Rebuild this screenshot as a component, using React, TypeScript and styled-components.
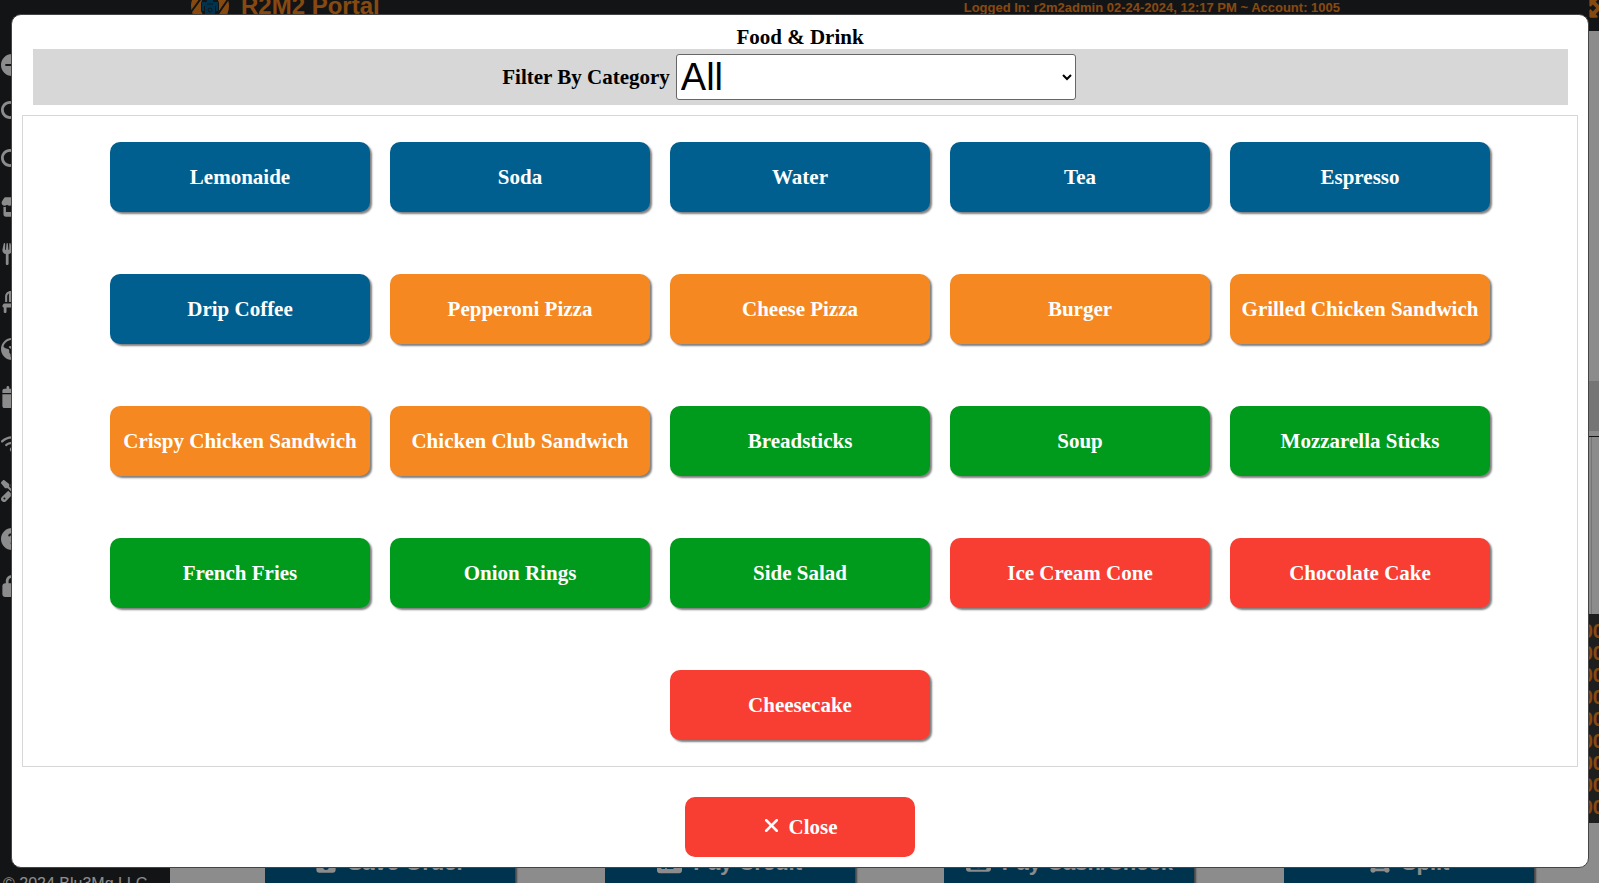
import React, { useState } from "react";
import styled, { createGlobalStyle } from "styled-components";
import {
  FaCalendar,
  FaChair,
  FaCircleArrowRight,
  FaCircleQuestion,
  FaCreditCard,
  FaDrawPolygon,
  FaEarthAmericas,
  FaFloppyDisk,
  FaLock,
  FaMagnifyingGlass,
  FaMaximize,
  FaRegMoneyBill1,
  FaScrewdriverWrench,
  FaStore,
  FaUtensils,
  FaWifi,
  FaXmark,
} from "react-icons/fa6";

const color = {
  blue: "#005f8f",
  orange: "#f58820",
  green: "#009a1c",
  red: "#f83d32",
  shell: "#242628",
};

const GlobalStyle = createGlobalStyle`
  *, *::before, *::after { box-sizing: border-box; }
  body { margin: 0; background: #fff; font-family: "Liberation Sans", Arial, sans-serif; }
  button, select { font: inherit; }
`;

const Page = styled.div`
  height: 100vh;
  display: flex;
  flex-direction: column;
  overflow: hidden;
`;

const Header = styled.header`
  flex: none;
  display: flex;
  align-items: center;
  height: 50px;
  margin-top: -19px;
  padding-left: 190px;
  background: ${color.shell};
  color: ${color.orange};
  font-weight: bold;
`;

const Brand = styled.div`
  flex: 1;
  display: flex;
  align-items: center;
  gap: 11px;
  font-size: 24px;
  line-height: 28px;
`;

const Session = styled.div`
  padding-top: 3px;
  margin-right: 248px;
  font-size: 13px;
`;

const IconButton = styled.button`
  display: flex;
  margin: 4px -11px 0 0;
  padding: 0;
  border: 0;
  background: none;
  color: inherit;
  font-size: 22px;
`;

const Body = styled.div`
  flex: 1;
  min-height: 0;
  display: flex;
`;

const Sidebar = styled.aside`
  width: 170px;
  display: flex;
  flex-direction: column;
  justify-content: space-between;
  background: ${color.shell};
  color: #fff;
`;

const Nav = styled.nav`
  display: flex;
  flex-direction: column;
  justify-content: space-between;
  height: 566px;
  padding: 23px 0 0 1px;

  a {
    display: flex;
    color: inherit;
    font-size: 22px;
  }
`;

const Copyright = styled.small`
  margin: 0 0 -10px 3px;
  font-size: 16px;
  line-height: 18px;
`;

const Main = styled.main`
  flex: 1;
  display: flex;
  flex-direction: column;
`;

const Ticket = styled.section`
  flex: 1;
  display: flex;
  flex-direction: column;
  justify-content: flex-end;
`;

const TicketHead = styled.div`
  height: 50px;
  margin-bottom: 5px;
  background: #d6d6d6;
`;

const TicketFrame = styled.div`
  border-top: 1px solid #222;
`;

const TicketLines = styled.div`
  height: 177px;
  margin-right: 7px;
  border-right: 1px solid #d6d6d6;
`;

const Totals = styled.ul`
  margin: 0 -5px 0 0;
  padding: 6px 0 5px;
  list-style: none;
  background: #383838;
  color: ${color.orange};
  font-size: 20px;
  font-weight: bold;
  line-height: 22px;
  text-align: right;
`;

const Actions = styled.div`
  flex: none;
  display: grid;
  grid-template-columns: repeat(4, 1fr);
  justify-items: center;
  margin: 10px 0 -10px;
  padding: 0 20px 0 50px;
`;

const ActionButton = styled.button<{ $wideIcon?: boolean }>`
  display: flex;
  align-items: center;
  justify-content: center;
  gap: 11px;
  width: 250px;
  height: 60px;
  border: 0;
  border-radius: 10px;
  background: ${color.blue};
  box-shadow: 2px 2px 2px gray;
  color: #fff;
  font-size: 22px;
  font-weight: bold;

  svg {
    font-size: ${(p) => (p.$wideIcon ? 25 : 22)}px;
  }
`;

const Backdrop = styled.div`
  position: fixed;
  inset: 0;
  padding: 14px 10px 15px 11px;
  background: rgba(0, 0, 0, 0.45);
`;

const Dialog = styled.div`
  display: flex;
  flex-direction: column;
  padding: 10px;
  border: 1px solid #444;
  border-radius: 10px;
  background: #fff;
  color: #000;
  font-family: "Liberation Serif", "Times New Roman", serif;
  font-size: 21px;
  font-weight: bold;
`;

const Title = styled.h1`
  margin: 0;
  font-size: 21px;
  line-height: 24px;
  text-align: center;
`;

const FilterBar = styled.div`
  display: flex;
  align-items: center;
  justify-content: center;
  gap: 6px;
  margin: 0 10px 0 11px;
  padding: 5px 28px 5px 5px;
  background: #d7d7d7;
`;

const CategorySelect = styled.select`
  width: 400px;
  height: 46px;
  border: 1px solid #666;
  border-radius: 3px;
  background-color: #fff;
  color: #000;
  font-family: "Liberation Sans", Arial, sans-serif;
  font-size: 38px;
  font-weight: normal;
`;

const ItemPanel = styled.div`
  display: flex;
  flex-wrap: wrap;
  justify-content: center;
  gap: 62px 20px;
  margin-top: 10px;
  padding: 26px 80px;
  border: 1px solid #d7d7d7;
`;

const ItemButton = styled.button<{ $tone: string }>`
  width: 260px;
  height: 70px;
  padding: 0;
  border: 0;
  border-radius: 10px;
  background: ${(p) => p.$tone};
  box-shadow: 2px 2px 2px gray;
  color: #fff;
`;

const CloseButton = styled.button`
  display: flex;
  align-items: center;
  align-self: center;
  justify-content: center;
  gap: 7px;
  width: 230px;
  height: 60px;
  margin-top: 30px;
  padding: 0 2px 0 0;
  border: 0;
  border-radius: 10px;
  background: ${color.red};
  color: #fff;

  svg {
    margin-bottom: 3px;
  }
`;

const categories = [
  { name: "Drinks", tone: color.blue, items: ["Lemonaide", "Soda", "Water", "Tea", "Espresso", "Drip Coffee"] },
  {
    name: "Entrees",
    tone: color.orange,
    items: ["Pepperoni Pizza", "Cheese Pizza", "Burger", "Grilled Chicken Sandwich", "Crispy Chicken Sandwich", "Chicken Club Sandwich"],
  },
  {
    name: "Sides",
    tone: color.green,
    items: ["Breadsticks", "Soup", "Mozzarella Sticks", "French Fries", "Onion Rings", "Side Salad"],
  },
  { name: "Desserts", tone: color.red, items: ["Ice Cream Cone", "Chocolate Cake", "Cheesecake"] },
];

const navItems = [
  { label: "Sign in", Icon: FaCircleArrowRight },
  { label: "Search orders", Icon: FaMagnifyingGlass },
  { label: "Search customers", Icon: FaMagnifyingGlass },
  { label: "Store", Icon: FaStore },
  { label: "Menu", Icon: FaUtensils },
  { label: "Tables", Icon: FaChair },
  { label: "Online", Icon: FaEarthAmericas },
  { label: "Calendar", Icon: FaCalendar },
  { label: "Network", Icon: FaWifi },
  { label: "Tools", Icon: FaScrewdriverWrench },
  { label: "Help", Icon: FaCircleQuestion },
  { label: "Lock", Icon: FaLock },
];

const actions = [
  { label: "Save Order", Icon: FaFloppyDisk, wide: false },
  { label: "Pay Credit", Icon: FaCreditCard, wide: true },
  { label: "Pay Cash/Check", Icon: FaRegMoneyBill1, wide: true },
  { label: "Split", Icon: FaDrawPolygon, wide: false },
];

function Logo() {
  return (
    <svg width="40" height="40" viewBox="0 0 40 40" aria-hidden="true">
      <circle cx="20" cy="20" r="19" fill={color.orange} />
      <path d="M14 8h12l3 9v8l-4 8H15l-4-8v-8z" fill={color.shell} />
      <path d="M1 26L12 11M28 28L39 12" stroke={color.shell} strokeWidth="2" />
      <path d="M17 10h6v6h5v9h-2v-5h-1v10h-3v5h-4v-5h-3V20h-1v5h-2v-9h5z" fill={color.blue} />
      <circle cx="20" cy="24" r="2" fill="none" stroke={color.shell} />
      <path d="M17 18h6" stroke={color.shell} />
    </svg>
  );
}

export default function App() {
  const [category, setCategory] = useState("All");
  const [open, setOpen] = useState(true);
  const visible = categories.filter((c) => category === "All" || c.name === category);

  return (
    <>
      <GlobalStyle />
      <Page>
        <Header>
          <Brand>
            <Logo />
            R2M2 Portal
          </Brand>
          <Session>Logged In: r2m2admin 02-24-2024, 12:17 PM ~ Account: 1005</Session>
          <IconButton aria-label="Full screen">
            <FaMaximize />
          </IconButton>
        </Header>
        <Body>
          <Sidebar>
            <Nav>
              {navItems.map(({ label, Icon }) => (
                <a key={label} href="#" aria-label={label}>
                  <Icon />
                </a>
              ))}
            </Nav>
            <Copyright>© 2024 Blu3Mg LLC</Copyright>
          </Sidebar>
          <Main>
            <Ticket>
              <TicketHead />
              <TicketFrame>
                <TicketLines />
              </TicketFrame>
              <Totals>
                {Array.from({ length: 9 }, (_, i) => (
                  <li key={i}>00</li>
                ))}
              </Totals>
            </Ticket>
            <Actions>
              {actions.map(({ label, Icon, wide }) => (
                <ActionButton key={label} $wideIcon={wide}>
                  <Icon />
                  {label}
                </ActionButton>
              ))}
            </Actions>
          </Main>
        </Body>
      </Page>
      {open && (
        <Backdrop>
          <Dialog role="dialog" aria-modal="true" aria-labelledby="dialog-title">
            <Title id="dialog-title">Food &amp; Drink</Title>
            <FilterBar>
              <label htmlFor="category">Filter By Category</label>
              <CategorySelect id="category" value={category} onChange={(e) => setCategory(e.target.value)}>
                <option>All</option>
                {categories.map((c) => (
                  <option key={c.name}>{c.name}</option>
                ))}
              </CategorySelect>
            </FilterBar>
            <ItemPanel>
              {visible.flatMap((c) =>
                c.items.map((item) => (
                  <ItemButton key={item} $tone={c.tone}>
                    {item}
                  </ItemButton>
                ))
              )}
            </ItemPanel>
            <CloseButton onClick={() => setOpen(false)}>
              <FaXmark aria-hidden="true" />
              Close
            </CloseButton>
          </Dialog>
        </Backdrop>
      )}
    </>
  );
}
